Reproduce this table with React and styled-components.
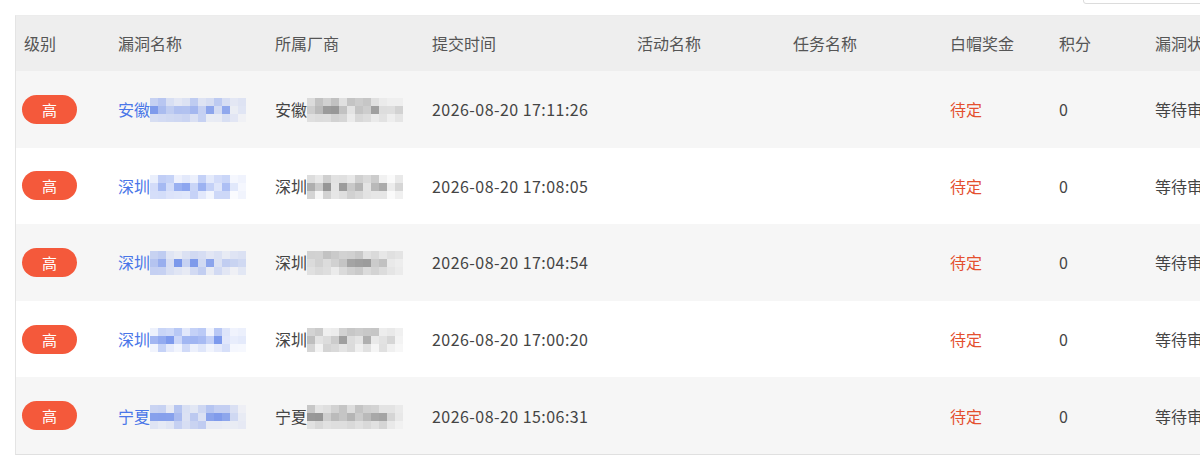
import React from "react";
import styled, { createGlobalStyle } from "styled-components";

const Global = createGlobalStyle`
  body {
    margin: 0;
    background: #fff;
    font-family: "Noto Sans CJK SC", "Noto Sans", sans-serif;
    overflow: hidden;
  }
`;

const Page = styled.div`
  position: relative;
  width: 1200px;
  height: 473px;
  padding: 15px 0 0 15px;
  box-sizing: border-box;
  overflow: hidden;
`;

const SearchEdge = styled.div`
  position: absolute;
  top: -30px;
  left: 1083px;
  width: 140px;
  height: 32px;
  border: 1px solid #dcdcdc;
  border-radius: 3px;
  background: #fff;
`;

const Table = styled.div`
  width: 1260px;
  border-top: 1px solid #ececec;
  border-left: 1px solid #e4e4e4;
  border-bottom: 1px solid #e0e0e0;
`;

const cols = "94px 157px 157px 205px 156px 157px 109px 96px 1fr";

const HeadRow = styled.div`
  display: grid;
  grid-template-columns: ${cols};
  height: 55px;
  align-items: center;
  background: #eeeeee;
  color: #555;
  font-size: 16px;
  padding-bottom: 2px;
  box-sizing: border-box;
`;

const Row = styled.div`
  display: grid;
  grid-template-columns: ${cols};
  height: 76.6px;
  align-items: center;
  background: ${(p) => (p.$striped ? "#f6f6f6" : "#ffffff")};
  color: #444;
  font-size: 16px;
`;

const Cell = styled.div`
  padding-left: 8px;
  white-space: nowrap;
  display: flex;
  align-items: center;
  color: ${(p) => p.$color || "inherit"};
  letter-spacing: ${(p) => p.$spacing || "normal"};
`;

const Badge = styled.span`
  display: inline-flex;
  align-items: center;
  justify-content: center;
  width: 55px;
  height: 29px;
  margin-left: -2px;
  border-radius: 15px;
  background: #f4593b;
  color: #fff;
  font-size: 15px;
`;

const Mosaic = ({ seed, color, cols = 12 }) => {
  let s = seed;
  const rnd = () => {
    s = (s * 9301 + 49297) % 233280;
    return s / 233280;
  };
  const cells = [];
  for (let r = 0; r < 3; r++) {
    for (let c = 0; c < cols; c++) {
      const v = rnd();
      const fade = c > cols - 3 ? 0.4 : 1;
      const rowFade = r === 1 ? 1 : r === 0 ? 0.55 : 0.45;
      const op = (0.15 + v * 0.65) * fade * rowFade;
      cells.push(
        <rect key={r + "-" + c} x={c * 8} y={r * 8} width="8" height="8" fill={color} opacity={op} />
      );
    }
  }
  return (
    <svg width={cols * 8} height="24" style={{ marginTop: 2 }}>
      {cells}
    </svg>
  );
};

const heads = ["级别", "漏洞名称", "所属厂商", "提交时间", "活动名称", "任务名称", "白帽奖金", "积分", "漏洞状态"];

const rows = [
  { p: "安徽", v: "安徽", t: "2026-08-20 17:11:26" },
  { p: "深圳", v: "深圳", t: "2026-08-20 17:08:05" },
  { p: "深圳", v: "深圳", t: "2026-08-20 17:04:54" },
  { p: "深圳", v: "深圳", t: "2026-08-20 17:00:20" },
  { p: "宁夏", v: "宁夏", t: "2026-08-20 15:06:31" },
];

export default function App() {
  return (
    <Page>
      <Global />
      <SearchEdge />
      <Table>
        <HeadRow>
          {heads.map((h) => (
            <Cell key={h}>{h}</Cell>
          ))}
        </HeadRow>
        {rows.map((r, i) => (
          <Row key={i} $striped={i % 2 === 0}>
            <Cell>
              <Badge>高</Badge>
            </Cell>
            <Cell $color="#4a76e8">
              {r.p}
              <Mosaic seed={i * 37 + 11} color="#5b7fe8" />
            </Cell>
            <Cell>
              {r.v}
              <Mosaic seed={i * 53 + 29} color="#7a7a7a" />
            </Cell>
            <Cell $spacing="0.45px">{r.t}</Cell>
            <Cell />
            <Cell />
            <Cell $color="#e4502f">待定</Cell>
            <Cell>0</Cell>
            <Cell>等待审核</Cell>
          </Row>
        ))}
      </Table>
    </Page>
  );
}
